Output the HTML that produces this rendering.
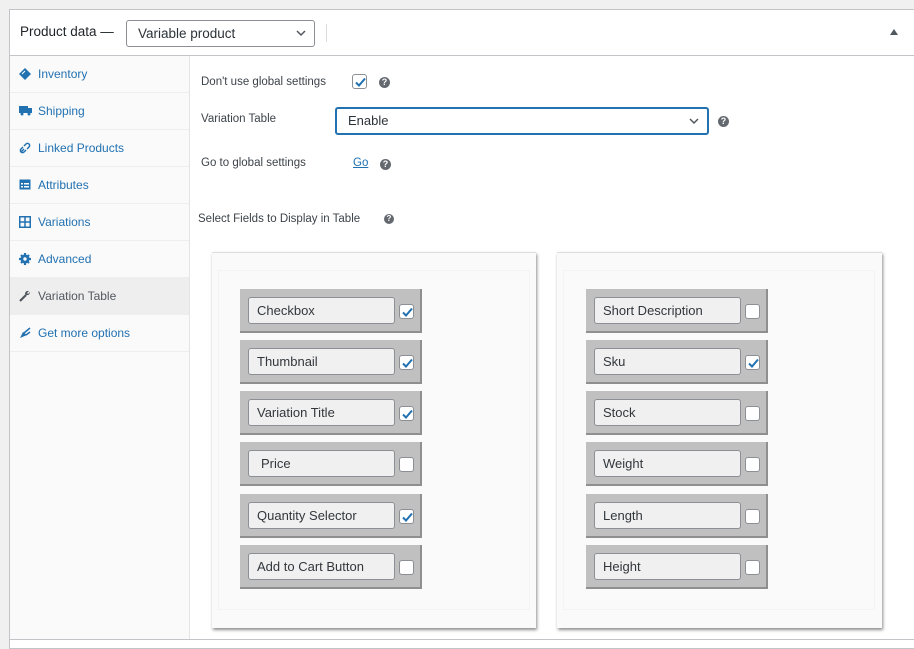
<!DOCTYPE html>
<html><head><meta charset="utf-8"><style>
*{box-sizing:border-box;margin:0;padding:0}
body{width:914px;height:645px;background:#f0f0f1;font-family:"Liberation Sans",sans-serif;position:relative;overflow:hidden;color:#3c434a}
.panel{position:absolute;left:9px;top:9px;width:906px;height:640px;background:#fff;border:1px solid #c3c4c7}
.abs{position:absolute}
.hdr{left:0;top:0;width:904px;height:46px;border-bottom:1px solid #c3c4c7}
.side{left:0;top:46px;width:180px;height:584px;background:#fafafa;border-right:1px solid #e5e5e5}
.side .it{position:absolute;left:0;width:179px;height:37px;border-bottom:1px solid #eee;color:#2271b1;font-size:12px;padding-left:28px;line-height:37px}
.side .it svg{position:absolute;left:9px;top:12px}
.side .it.act{background:#eee;color:#50575e}
.lbl{font-size:11.5px;color:#3c434a}
.q{width:11px;height:11px;border-radius:50%;background:#646970;color:#fff;font-size:9px;font-weight:bold;text-align:center;line-height:11px}
.cb{width:15px;height:15px;border:1px solid #8c8f94;border-radius:3px;background:#fff}
.cb svg{position:absolute;left:0;top:0}
.box{background:#fafafa;box-shadow:1px 2px 3px rgba(0,0,0,.45);border-top:1px solid #ddd}
.row{position:absolute;width:182px;height:44px;background:#c0c0c0;border-right:2px solid #8f8f8f;border-bottom:2px solid #8f8f8f}
.row .in{position:absolute;left:8px;top:8px;width:147px;height:27px;border:1px solid #8c8f94;border-radius:3px;background:#f0f0f0;font-size:13px;color:#32373c;padding-left:8px;line-height:25px}
.row .cb{position:absolute;left:159px;top:15px}
</style></head><body>
<div class="panel">
 <div class="abs hdr">
  <div class="abs" style="left:10px;top:14px;font-size:13.5px;color:#1d2327">Product data —</div>
  <div class="abs" style="left:116px;top:10px;width:189px;height:27px;border:1px solid #8c8f94;border-radius:3px;font-size:13.5px;color:#2c3338;padding-left:11px;line-height:25px">Variable product
   <svg class="abs" style="right:8px;top:9px" width="10" height="7" viewBox="0 0 10 7"><path d="M1 1l4 4 4-4" stroke="#50575e" stroke-width="1.5" fill="none"/></svg></div>
  <div class="abs" style="left:316px;top:14px;width:1px;height:18px;background:#dcdcde"></div>
  <svg class="abs" style="left:880px;top:19px" width="8" height="6"><path d="M0 6L4 0 8 6z" fill="#50575e"/></svg>
 </div>
 <div class="abs side">
  <div class="it" style="top:0"><svg width="12" height="12" viewBox="0 0 12 12"><path d="M6 0l6 6-6 6-6-6z" fill="#2271b1"/><path d="M3 6l3-3" stroke="#fff"/></svg>Inventory</div>
  <div class="it" style="top:37px"><svg width="13" height="11" viewBox="0 0 13 11"><rect x="0" y="1" width="9" height="7" fill="#2271b1"/><rect x="8" y="3" width="5" height="5" fill="#2271b1"/><circle cx="3" cy="9" r="1.5" fill="#2271b1"/><circle cx="10" cy="9" r="1.5" fill="#2271b1"/></svg>Shipping</div>
  <div class="it" style="top:74px"><svg width="12" height="12" viewBox="0 0 12 12"><path d="M2 10l3-3M5 4l2-2a2 2 0 013 3l-2 2M7 8l-2 2a2 2 0 01-3-3l2-2" stroke="#2271b1" stroke-width="1.5" fill="none"/></svg>Linked Products</div>
  <div class="it" style="top:111px"><svg width="12" height="11" viewBox="0 0 12 11"><rect x="0.5" y="0.5" width="11" height="10" fill="#2271b1"/><rect x="2" y="4" width="2" height="1.5" fill="#fff"/><rect x="5" y="4" width="5" height="1.5" fill="#fff"/><rect x="2" y="7" width="2" height="1.5" fill="#fff"/><rect x="5" y="7" width="5" height="1.5" fill="#fff"/></svg>Attributes</div>
  <div class="it" style="top:148px"><svg width="12" height="12" viewBox="0 0 12 12"><rect x="0.75" y="0.75" width="10.5" height="10.5" stroke="#2271b1" stroke-width="1.5" fill="none"/><path d="M6 0v12M0 6h12" stroke="#2271b1" stroke-width="1.5"/></svg>Variations</div>
  <div class="it" style="top:185px"><svg width="12" height="12" viewBox="0 0 12 12"><circle cx="6" cy="6" r="4.5" fill="#2271b1"/><path d="M6 0v12M0 6h12M2 2l8 8M10 2l-8 8" stroke="#2271b1" stroke-width="2.2"/><circle cx="6" cy="6" r="1.7" fill="#fafafa"/></svg>Advanced</div>
  <div class="it act" style="top:222px"><svg width="12" height="12" viewBox="0 0 12 12"><path d="M1 11l6-6" stroke="#50575e" stroke-width="2.2"/><path d="M6 4a3 3 0 014-3l-2 2 1 1 2-2a3 3 0 01-4 3z" fill="#50575e"/></svg>Variation Table</div>
  <div class="it" style="top:259px"><svg width="12" height="12" viewBox="0 0 12 12"><path d="M1 11l3-6 4 3z" fill="#2271b1"/><path d="M5 6l6-5M7 8l4-3" stroke="#2271b1" stroke-width="1.5"/></svg>Get more options</div>
 </div>
 <div class="abs lbl" style="left:191px;top:66px">Don't use global settings</div>
 <div class="abs cb" style="left:342px;top:64px"><svg width="15" height="15"><path d="M3 7.5l3 3 6-7" stroke="#2271b1" stroke-width="2" fill="none"/></svg></div>
 <div class="abs q" style="left:369px;top:67px">?</div>
 <div class="abs lbl" style="left:191px;top:103px">Variation Table</div>
 <div class="abs" style="left:325px;top:97px;width:374px;height:28px;border:2px solid #2271b1;border-radius:3px;font-size:13px;color:#2c3338;padding-left:11px;line-height:24px">Enable
  <svg class="abs" style="right:8px;top:9px" width="10" height="7" viewBox="0 0 10 7"><path d="M1 1l4 4 4-4" stroke="#50575e" stroke-width="1.5" fill="none"/></svg></div>
 <div class="abs q" style="left:708px;top:106px">?</div>
 <div class="abs lbl" style="left:191px;top:147px">Go to global settings</div>
 <div class="abs lbl" style="left:343px;top:147px;color:#2271b1;text-decoration:underline">Go</div>
 <div class="abs q" style="left:370px;top:149px">?</div>
 <div class="abs lbl" style="left:188px;top:203px">Select Fields to Display in Table</div>
 <div class="abs q" style="left:374px;top:204px;width:10px;height:10px;line-height:10px;font-size:8px">?</div>

 <div class="abs box" style="left:202px;top:242px;width:324px;height:376px">
  <div class="abs" style="left:6px;top:17px;width:312px;height:340px;border:1px solid #f4f4f4"></div>
  <div class="row" style="left:28px;top:36px"><div class="in">Checkbox</div><div class="cb"><svg width="15" height="15"><path d="M3 7.5l3 3 6-7" stroke="#2271b1" stroke-width="2" fill="none"/></svg></div></div>
  <div class="row" style="left:28px;top:87px"><div class="in">Thumbnail</div><div class="cb"><svg width="15" height="15"><path d="M3 7.5l3 3 6-7" stroke="#2271b1" stroke-width="2" fill="none"/></svg></div></div>
  <div class="row" style="left:28px;top:138px"><div class="in">Variation Title</div><div class="cb"><svg width="15" height="15"><path d="M3 7.5l3 3 6-7" stroke="#2271b1" stroke-width="2" fill="none"/></svg></div></div>
  <div class="row" style="left:28px;top:189px"><div class="in" style="padding-left:12px">Price</div><div class="cb"></div></div>
  <div class="row" style="left:28px;top:241px"><div class="in">Quantity Selector</div><div class="cb"><svg width="15" height="15"><path d="M3 7.5l3 3 6-7" stroke="#2271b1" stroke-width="2" fill="none"/></svg></div></div>
  <div class="row" style="left:28px;top:292px"><div class="in">Add to Cart Button</div><div class="cb"></div></div>
 </div>
 <div class="abs box" style="left:547px;top:242px;width:325px;height:376px">
  <div class="abs" style="left:6px;top:17px;width:312px;height:340px;border:1px solid #f4f4f4"></div>
  <div class="row" style="left:29px;top:36px"><div class="in">Short Description</div><div class="cb"></div></div>
  <div class="row" style="left:29px;top:87px"><div class="in">Sku</div><div class="cb"><svg width="15" height="15"><path d="M3 7.5l3 3 6-7" stroke="#2271b1" stroke-width="2" fill="none"/></svg></div></div>
  <div class="row" style="left:29px;top:138px"><div class="in">Stock</div><div class="cb"></div></div>
  <div class="row" style="left:29px;top:189px"><div class="in">Weight</div><div class="cb"></div></div>
  <div class="row" style="left:29px;top:241px"><div class="in">Length</div><div class="cb"></div></div>
  <div class="row" style="left:29px;top:292px"><div class="in">Height</div><div class="cb"></div></div>
 </div>
</div>
<div class="abs" style="left:10px;top:639px;width:904px;height:1px;background:#c3c4c7"></div>
<div class="abs" style="left:10px;top:640px;width:904px;height:5px;background:#fff"></div>
</body></html>
